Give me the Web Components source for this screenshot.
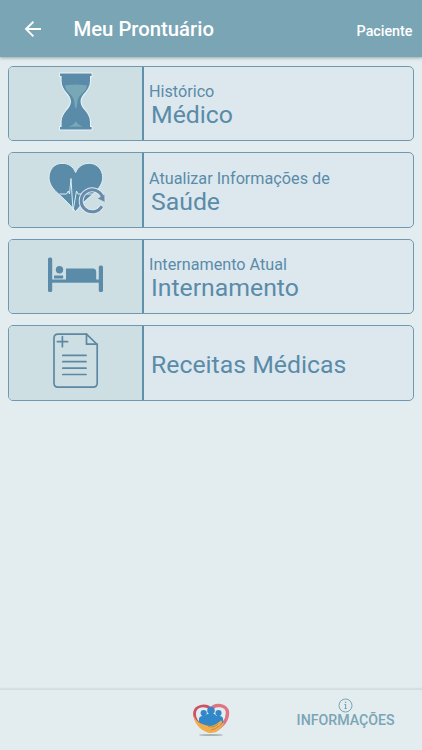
<!DOCTYPE html>
<html lang="pt-BR">
<head>
<meta charset="UTF-8">
<meta name="viewport" content="width=device-width, initial-scale=1">
<title>Meu Prontuário</title>
<style>
  html, body {
    height: 100%;
    margin: 0;
  }
  body {
    font-family: Roboto, "Liberation Sans", sans-serif;
    background: #e3ecef;
    overflow: hidden;
  }
</style>
</head>
<body>
<record-page></record-page>

<script>
const icons = {
  hourglass: `
    <g fill="#5a8ba9" stroke="#e8f4fa" stroke-width="2" paint-order="stroke" stroke-linejoin="round">
      <path d="M51 6.5H82.6V9H81V14C81 24 71.5 27 71.5 34.5S81 45 81 55V60H82.6V62.5H51V60H52.6V55C52.6 45 62 42 62 34.5S52.6 24 52.6 14V9H51Z"/>
    </g>
    <path fill="#78a7b6" d="M55.8 18.5Q67 16.3 78 18.5C77.6 25.5 69.2 27 68.4 34.5Q68.3 39.5 66.9 42.3Q65.5 39.5 65.2 34.5C64.4 27 56.2 25.5 55.8 18.5ZM59.5 59.8Q65.5 57.5 66.8 54Q68.2 57.5 74.2 59.8Z"/>`,
  heart: `
    <path fill="#5a8ba9" stroke="#e4f1f6" stroke-width="1" d="M66.6 58.5Q60 50 49 40.5C43.5 35.7 40 30.5 40 24.5C40 16.5 45.5 10.3 53 10.3C59.5 10.3 64.2 13.5 66.6 19.5C69 13.5 74 10.3 80.3 10.3C87.8 10.3 93.7 16.5 93.7 24.5C93.7 30.5 90 35.7 84.5 40.5Q73 50 66.6 58.5Z"/>
    <path fill="none" stroke="#d8edf3" stroke-width="1" d="M50.5 41H57.5L59.3 38L60.5 41L62 25.5L64 58L67.5 38L69 41H84"/>
    <path fill="none" stroke="#dceaf0" stroke-width="5" d="M93.5 44A11 11 0 1 0 92.8 53.2"/>
    <path fill="#688bab" stroke="#dceaf0" stroke-width=".7" d="M88 45.6L95.8 41L96 49.4Z"/>
    <path fill="none" stroke="#688bab" stroke-width="3" d="M93.5 44A11 11 0 1 0 92.8 53.2"/>`,
  bed: `
    <g fill="#5a8ba9">
      <rect x="39" y="17.5" width="4.2" height="34.5" rx="1.6"/>
      <rect x="89.8" y="25.5" width="4.2" height="26.5" rx="1.6"/>
      <rect x="42" y="39.5" width="49" height="3.2"/>
      <circle cx="50.5" cy="29.8" r="3.7"/>
      <rect x="45" y="35.4" width="9.2" height="3" rx=".6"/>
      <path d="M57 28.5H84Q87.2 28.5 87.2 32V40H57Z"/>
    </g>`,
  recipe: `
    <g fill="none" stroke="#5c88a4" stroke-width="1.7" stroke-linejoin="round" stroke-linecap="round">
      <path d="M49 8.1H77.5L88.2 18.5V57Q88.2 61.1 84 61.1H49Q45 61.1 45 57V12.2Q45 8.1 49 8.1Z"/>
      <path d="M77.5 8.1V18.2H88.2M48.4 15.7H58.6M53.4 10.7V20.7M53.8 29.4H77M53.8 35.7H77M53.8 42.2H77M53.8 48.5H77"/>
    </g>`,
};

class AppHeader extends HTMLElement {
  constructor() {
    super();
    this.attachShadow({ mode: "open" });
    this.shadowRoot.innerHTML = `
      <style>
        :host {
          display: flex;
          align-items: center;
          box-sizing: border-box;
          height: 57px;
          padding: 2px 9.5px 0 21px;
          background: #7aa5b5;
          color: #fff;
          font-weight: 500;
          box-shadow: 0 1px 3px rgba(60, 80, 90, .45);
        }
        svg { display: block; margin-right: 28.5px; }
        .title { flex: 1; font-size: 20.3px; line-height: 24px; margin-top: -2px; }
        .role { font-size: 14.3px; line-height: 18px; margin-top: 3px; }
      </style>
      <svg width="24" height="24" viewBox="0 0 24 24" fill="none" stroke="#fff" stroke-width="1.9">
        <path d="M20 11H5.2M12.4 3.7L5 11L12.4 18.4"/>
      </svg>
      <div class="title"><slot></slot></div>
      <div class="role"><slot name="role"></slot></div>
    `;
  }
}

class RecordCard extends HTMLElement {
  connectedCallback() {
    this.attachShadow({ mode: "open" });
    this.shadowRoot.innerHTML = `
      <style>
        :host {
          display: flex;
          box-sizing: border-box;
          height: 75.5px;
          border: 1px solid #7098b2;
          border-radius: 5px;
          background: #dce8ee;
          color: #5a8ba9;
          overflow: hidden;
        }
        .icon {
          flex: none;
          width: 133px;
          background: #cedfe3;
          border-right: 2px solid #6190ad;
        }
        svg { display: block; }
        .text {
          display: flex;
          flex-direction: column;
          justify-content: center;
          padding: 5px 0 0 5px;
          white-space: nowrap;
        }
        .label { font-size: 16.2px; line-height: 19px; }
        .name { font-size: 24.8px; line-height: 28px; padding-left: 2px; }
      </style>
      <div class="icon">
        <svg width="133" height="74" viewBox="0 0 133 74">${icons[this.getAttribute("icon")]}</svg>
      </div>
      <div class="text">
        <div class="label"><slot name="label"></slot></div>
        <div class="name"><slot></slot></div>
      </div>
    `;
    if (!this.querySelector("[slot=label]")) {
      this.shadowRoot.querySelector(".label").remove();
    }
  }
}

class AppFooter extends HTMLElement {
  constructor() {
    super();
    this.attachShadow({ mode: "open" });
    this.shadowRoot.innerHTML = `
      <style>
        :host {
          display: grid;
          grid-template-columns: 1fr 1fr 1fr;
          box-sizing: border-box;
          height: 61px;
          border-top: 1px solid #d3dde0;
          box-shadow: 0 -1px 1px rgba(120, 140, 150, .12);
          color: #7aa5b5;
        }
        svg { display: block; }
        .logo { grid-column: 2; justify-self: center; padding-top: 13px; }
        .info {
          display: flex;
          flex-direction: column;
          align-items: center;
          padding: 8px 0 0;
          margin-right: 12px;
          font-size: 14.2px;
          font-weight: 500;
          line-height: 15px;
        }
      </style>
      <svg class="logo" width="40" height="36" viewBox="0 0 40 36">
        <ellipse cx="20" cy="32" rx="12" ry="1.1" fill="#a9b3b6"/>
        <path fill="none" stroke="#cb5362" stroke-width="2.8" d="M20 6C15 1 3.5 2 3.5 11C3.5 16 7 20 11 23"/>
        <path fill="none" stroke="#e07582" stroke-width="3.4" d="M19 7C24 0 36.5 1.5 36.5 10C36.5 18 30 24 23 28"/>
        <g fill="#3187c8">
          <circle cx="20" cy="7.5" r="3.8"/>
          <circle cx="12.7" cy="10" r="3.1"/>
          <circle cx="27.5" cy="10" r="3.1"/>
          <path d="M8 21V16Q8 13 12 13H14Q15 10.5 20 10.5T25 13H28Q32 13 32 16V21L24 25H13Z"/>
        </g>
        <path fill="#f0ad4b" d="M3 13C5 18 9 21 16 22.5C22 24 26 21 30 17.5Q31.5 17.5 31 19.5L27 25L32 19.5Q33.5 19.5 32 22.5C28 27 24 30 20 30C13 30 3 22 3 13Z"/>
        <path fill="none" stroke="#ad7c45" stroke-width=".7" d="M17 23.5Q24 25 27 21M20 27Q25 26 28 23"/>
      </svg>
      <div class="info">
        <svg width="15" height="15" viewBox="0 0 15 15">
          <circle cx="7.5" cy="7.5" r="6.5" fill="none" stroke="#7aa5b5"/>
          <path fill="#7aa5b5" d="M6.9 3.8H8.2V5H6.9ZM6.2 6H8.1V10.2H8.9V11H6.2V10.2H7V6.8H6.2Z"/>
        </svg>
        <slot></slot>
      </div>
    `;
  }
}

class RecordPage extends HTMLElement {
  constructor() {
    super();
    this.attachShadow({ mode: "open" });
    this.shadowRoot.innerHTML = `
      <style>
        :host {
          display: flex;
          flex-direction: column;
          height: 100vh;
        }
        main {
          flex: 1;
          display: flex;
          flex-direction: column;
          gap: 11px;
          padding: 8.5px 8px 0;
        }
      </style>
      <app-header>Meu Prontuário<span slot="role">Paciente</span></app-header>
      <main>
        <record-card icon="hourglass"><span slot="label">Histórico</span>Médico</record-card>
        <record-card icon="heart"><span slot="label">Atualizar Informações de</span>Saúde</record-card>
        <record-card icon="bed"><span slot="label">Internamento Atual</span>Internamento</record-card>
        <record-card icon="recipe">Receitas Médicas</record-card>
      </main>
      <app-footer>INFORMAÇÕES</app-footer>
    `;
  }
}

customElements.define("app-header", AppHeader);
customElements.define("record-card", RecordCard);
customElements.define("app-footer", AppFooter);
customElements.define("record-page", RecordPage);
</script>
</body>
</html>
